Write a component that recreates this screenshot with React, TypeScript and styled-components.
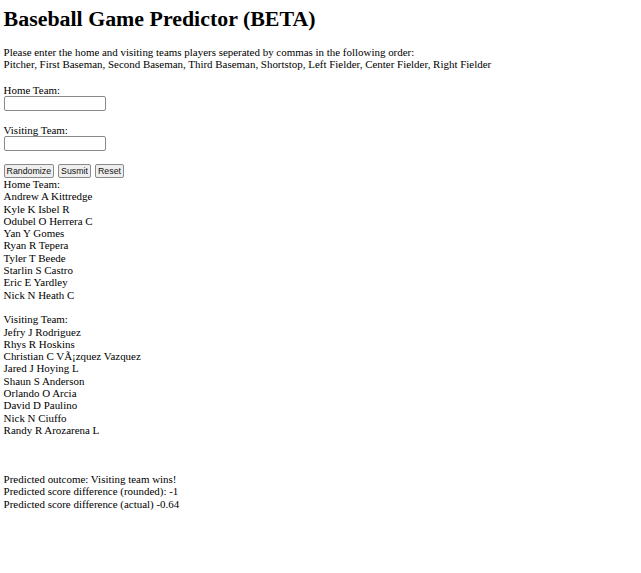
import React from "react";
import styled, { createGlobalStyle } from "styled-components";

const GlobalStyle = createGlobalStyle`
  html, body {
    margin: 0;
    padding: 0;
    background: #ffffff;
  }
  body {
    font-family: "Liberation Serif", "Times New Roman", serif;
    font-size: 10.95px;
    line-height: 12.3px;
    color: #000000;
  }
`;

const Page = styled.div`
  padding: 7.4px 0 0 3.6px;
  display: flex;
  flex-direction: column;
  align-items: flex-start;
`;

const Title = styled.h1`
  margin: 0 0 14px;
  font-size: 21.9px;
  line-height: 24.5px;
  font-weight: bold;
`;

const Intro = styled.p`
  margin: 0;
  line-height: 12.3px;
`;

const Form = styled.form`
  margin: 13.7px 0 0;
  display: flex;
  flex-direction: column;
  align-items: flex-start;
`;

const Field = styled.div<{ $spaced?: boolean }>`
  display: flex;
  flex-direction: column;
  align-items: flex-start;
  margin-top: ${(p) => (p.$spaced ? "13.4px" : "0")};
`;

const Label = styled.label`
  display: block;
  line-height: 12.3px;
  height: 11.7px;
`;

const TextInput = styled.input`
  box-sizing: border-box;
  width: 102px;
  height: 15px;
  margin: 0;
  padding: 0 2px;
  border: 1px solid #8a8a8a;
  border-radius: 2px;
  background: #ffffff;
  font-size: 8.9px;
`;

const ButtonRow = styled.div`
  display: flex;
  gap: 4px;
  margin-top: 13px;
`;

const Button = styled.button`
  box-sizing: border-box;
  height: 14px;
  margin: 0;
  padding: 0 2px;
  border: 1px solid #8a8a8a;
  border-radius: 2px;
  background: #efefef;
  color: #111111;
  font-family: "Liberation Sans", Arial, sans-serif;
  font-size: 8.8px;
  line-height: 12px;
`;

const Results = styled.div`
  display: flex;
  flex-direction: column;
  gap: 12.3px;
`;

const Roster = styled.div`
  display: flex;
  flex-direction: column;
`;

const Line = styled.div`
  line-height: 12.3px;
  height: 12.3px;
  white-space: nowrap;
`;

const Predictions = styled.div`
  margin-top: 36.9px;
  display: flex;
  flex-direction: column;
`;

const homePlayers = [
  "Andrew A Kittredge",
  "Kyle K Isbel R",
  "Odubel O Herrera C",
  "Yan Y Gomes",
  "Ryan R Tepera",
  "Tyler T Beede",
  "Starlin S Castro",
  "Eric E Yardley",
  "Nick N Heath C",
];

const visitingPlayers = [
  "Jefry J Rodriguez",
  "Rhys R Hoskins",
  "Christian C VÃ¡zquez Vazquez",
  "Jared J Hoying L",
  "Shaun S Anderson",
  "Orlando O Arcia",
  "David D Paulino",
  "Nick N Ciuffo",
  "Randy R Arozarena L",
];

export default function App() {
  return (
    <>
      <GlobalStyle />
      <Page>
        <Title>Baseball Game Predictor (BETA)</Title>
        <Intro>
          Please enter the home and visiting teams players seperated by commas in the following order:
          <br />
          Pitcher, First Baseman, Second Baseman, Third Baseman, Shortstop, Left Fielder, Center Fielder, Right Fielder
        </Intro>
        <Form onSubmit={(e) => e.preventDefault()}>
          <Field>
            <Label htmlFor="home">Home Team:</Label>
            <TextInput id="home" type="text" />
          </Field>
          <Field $spaced>
            <Label htmlFor="visiting">Visiting Team:</Label>
            <TextInput id="visiting" type="text" />
          </Field>
          <ButtonRow>
            <Button type="button">Randomize</Button>
            <Button type="submit">Susmit</Button>
            <Button type="reset">Reset</Button>
          </ButtonRow>
        </Form>
        <Results>
          <Roster>
            <Line>Home Team:</Line>
            {homePlayers.map((p) => (
              <Line key={p}>{p}</Line>
            ))}
          </Roster>
          <Roster>
            <Line>Visiting Team:</Line>
            {visitingPlayers.map((p) => (
              <Line key={p}>{p}</Line>
            ))}
          </Roster>
        </Results>
        <Predictions>
          <Line>Predicted outcome: Visiting team wins!</Line>
          <Line>Predicted score difference (rounded): -1</Line>
          <Line>Predicted score difference (actual) -0.64</Line>
        </Predictions>
      </Page>
    </>
  );
}
